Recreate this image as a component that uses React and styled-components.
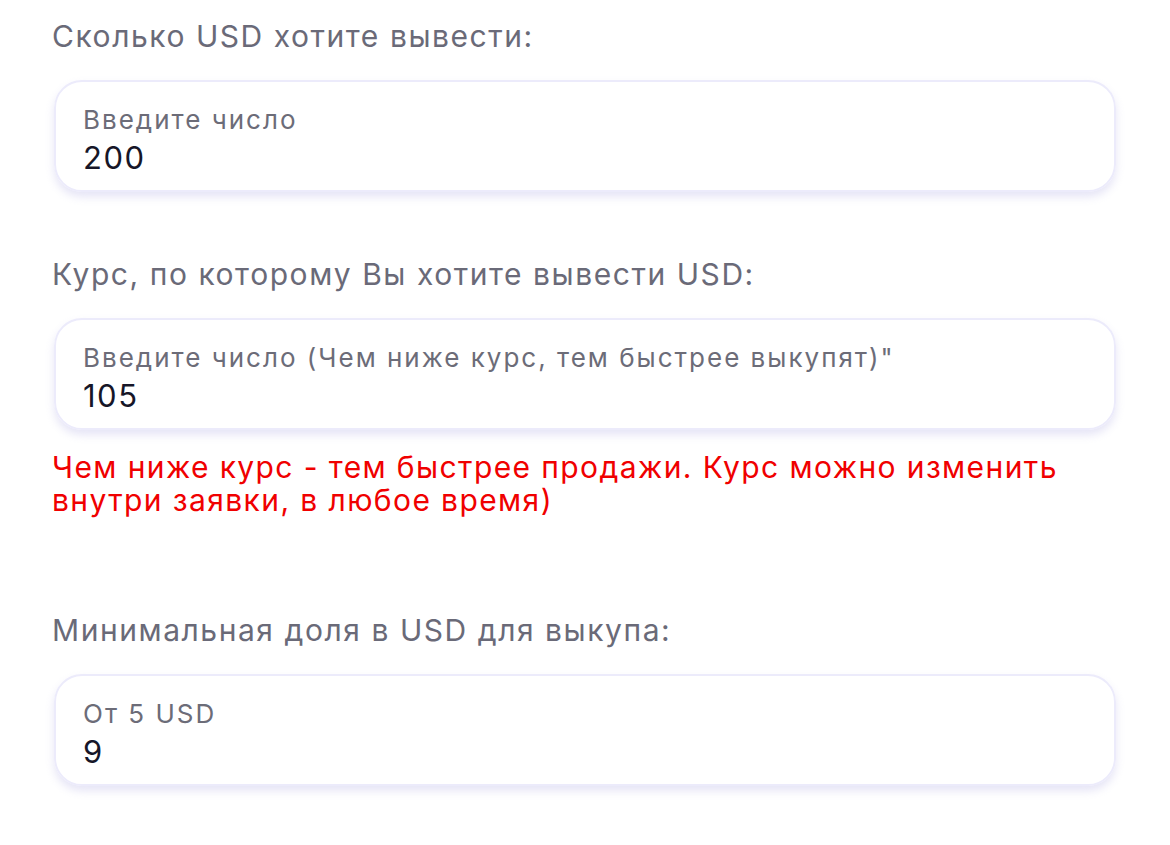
import styled, { createGlobalStyle } from "styled-components";

const GlobalStyle = createGlobalStyle`
    body {
        margin: 0;
        background: #ffffff;
        font-family: Inter, "Noto Sans", sans-serif;
    }
`;

const App = () => {
    return (
        <Page>
            <GlobalStyle />
            <Field>
                <Label>Сколько USD хотите вывести:</Label>
                <Card>
                    <Placeholder>Введите число</Placeholder>
                    <Value>200</Value>
                </Card>
            </Field>
            <Field>
                <Label>Курс, по которому Вы хотите вывести USD:</Label>
                <Card>
                    <Placeholder>Введите число (Чем ниже курс, тем быстрее выкупят)"</Placeholder>
                    <Value>105</Value>
                </Card>
                <Warning>
                    Чем ниже курс - тем быстрее продажи. Курс можно изменить
                    <br />
                    внутри заявки, в любое время)
                </Warning>
            </Field>
            <Field>
                <Label>Минимальная доля в USD для выкупа:</Label>
                <Card>
                    <Placeholder>От 5 USD</Placeholder>
                    <Value>9</Value>
                </Card>
            </Field>
        </Page>
    );
}

const Page = styled.div`
    padding: 16px 54px 40px 52px;
    display: flex;
    flex-direction: column;
    gap: 62px;
`;

const Field = styled.div`
    display: flex;
    flex-direction: column;
`;

const Label = styled.div`
    font-size: 30px;
    line-height: 40px;
    color: #6a6a78;
    letter-spacing: 1.55px;
    margin-bottom: 24px;
`;

const Card = styled.div`
    margin-left: 2px;
    height: 112px;
    box-sizing: border-box;
    border: 2px solid #ecebfb;
    border-radius: 28px;
    box-shadow: 0 5px 8px rgba(200, 198, 235, 0.45);
    padding: 20px 27px 0;
    display: flex;
    flex-direction: column;
`;

const Placeholder = styled.div`
    font-size: 26px;
    line-height: 36px;
    color: #6c6c78;
    letter-spacing: 2px;
`;

const Value = styled.div`
    font-size: 31px;
    line-height: 40px;
    color: #161628;
    letter-spacing: 1.5px;
`;

const Warning = styled.div`
    margin-top: 21px;
    margin-bottom: 31px;
    font-size: 30px;
    line-height: 33px;
    color: #f00000;
    letter-spacing: 1.4px;
`;

export default App;
